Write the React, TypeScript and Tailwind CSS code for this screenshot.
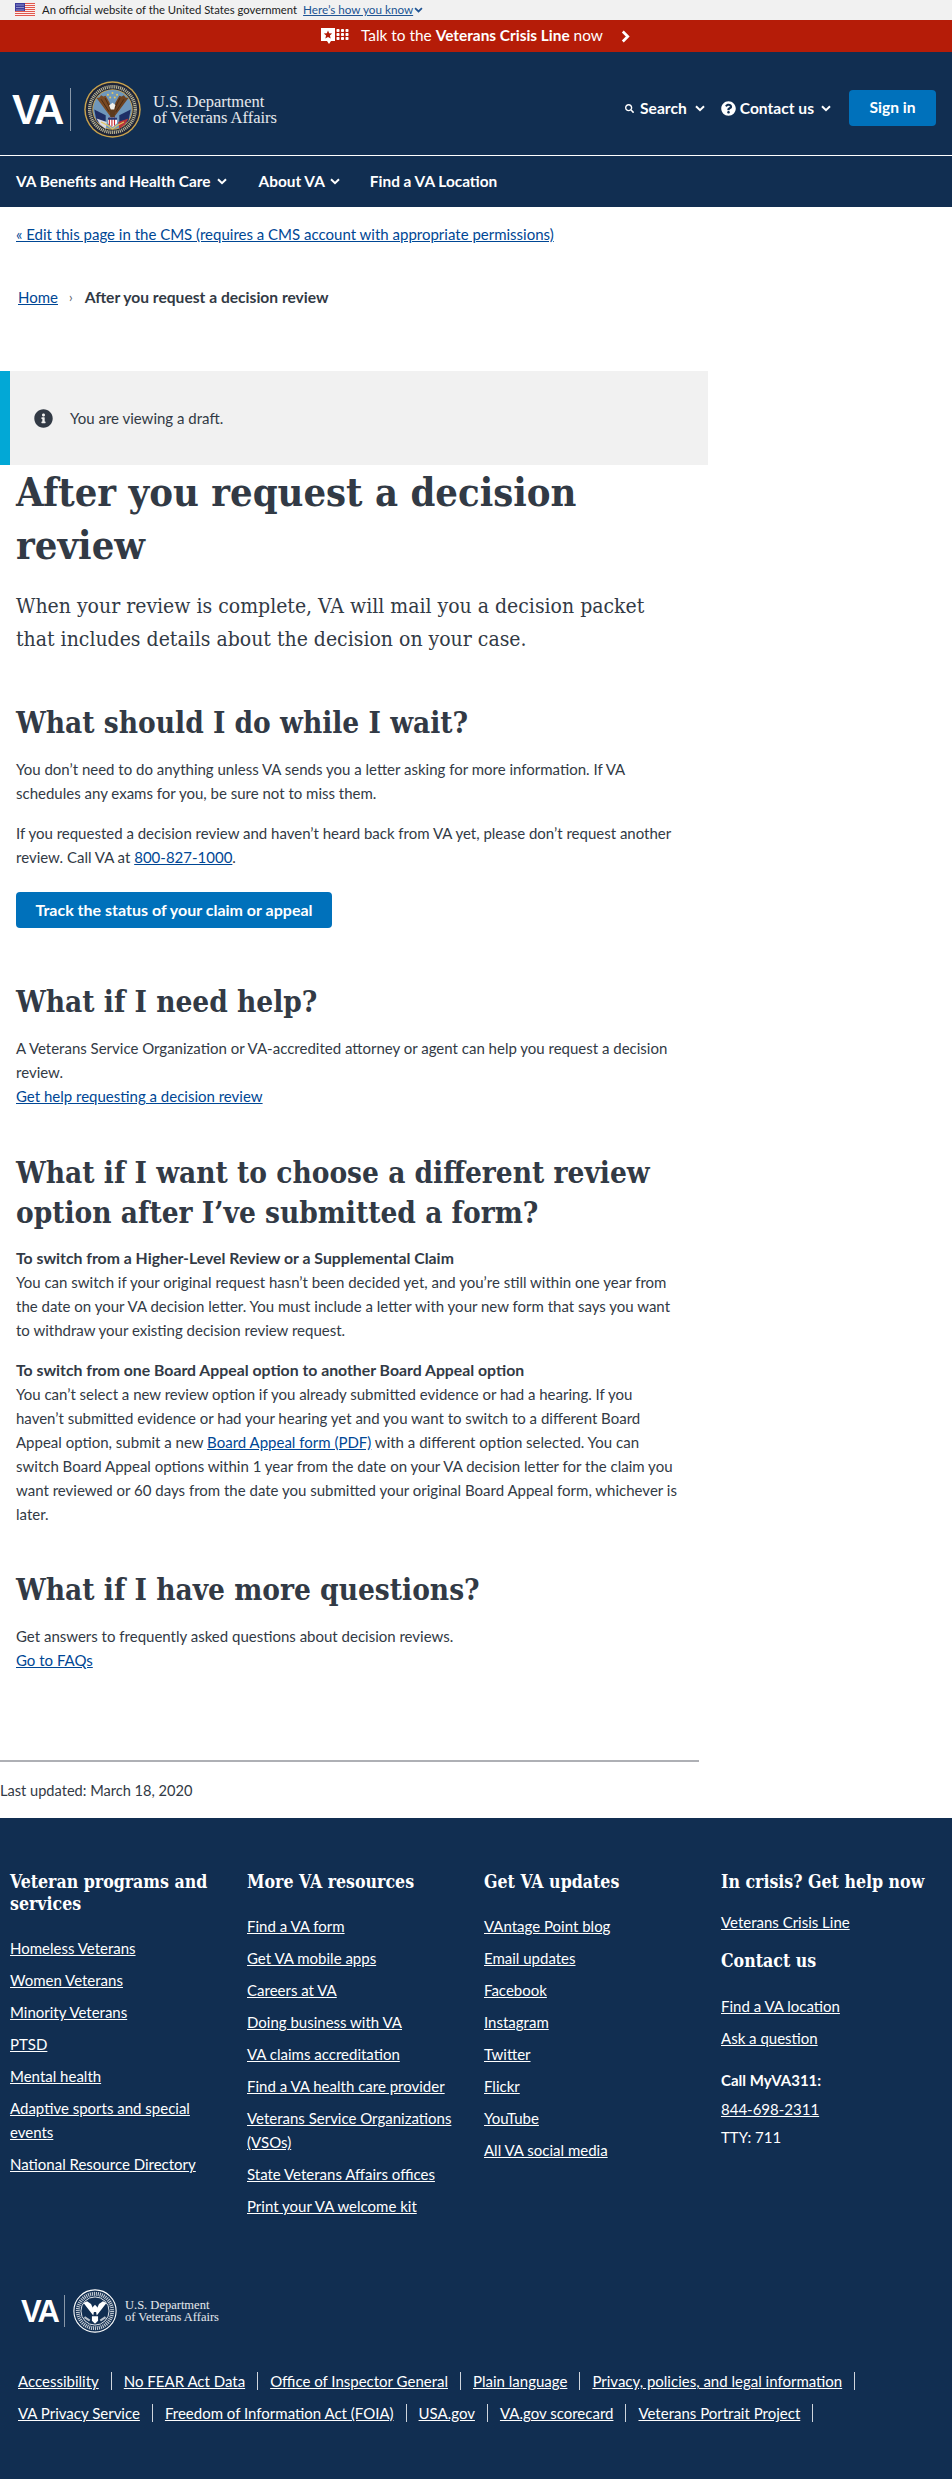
import { FaInfoCircle, FaQuestionCircle, FaSearch } from 'react-icons/fa';

const NAVY = 'bg-[#112e51]';

const Chevron = ({ className = 'w-[10px] h-[7px]' }: { className?: string }) => (
  <svg viewBox="0 0 10 7" className={className} fill="none" stroke="currentColor" strokeWidth="2">
    <path d="M1 1.2 5 5.2 9 1.2" />
  </svg>
);

const Flag = () => (
  <svg viewBox="0 0 20 14" className="w-[20px] h-[14px] shrink-0">
    <rect width="20" height="14" fill="#fff" />
    {[0, 2, 4, 6, 8, 10, 12].map((y) => (
      <rect key={y} y={y} width="20" height="1.1" fill="#e0584d" />
    ))}
    <rect width="10" height="8" fill="#3c3c9c" />
    {[1.5, 3.5, 5.5, 7.5].map((x) =>
      [1.5, 4, 6.5].map((y) => <rect key={`${x}${y}`} x={x} y={y} width="1" height="1" fill="#dfe3f5" />),
    )}
  </svg>
);

const CrisisIcon = () => (
  <svg viewBox="0 0 28 16" className="w-[28px] h-[16px] shrink-0">
    <path d="M0 0h14v13H10l-2 3-2-3H0z" fill="#fff" />
    <path d="M7 2.5l1.2 2.8 3 .2-2.3 2 .8 3L7 8.9 4.300 10.500l.8-3-2.300-2 3-.2z" fill="#b51c08" />
    {[15.5, 20, 24.5].map((x) =>
      [1, 5, 9].map((y) => <rect key={`${x}${y}`} x={x} y={y} width="3" height="3" rx="0.8" fill="#fff" />),
    )}
  </svg>
);

const Seal = () => (
  <svg viewBox="0 0 100 100" className="w-[57px] h-[57px] shrink-0">
    <circle cx="50" cy="50" r="49.500" fill="#c9a24d" />
    <circle cx="50" cy="50" r="47" fill="#1d2438" />
    <circle cx="50" cy="50" r="40" fill="none" stroke="#b9b394" strokeWidth="6" strokeDasharray="2 1.4" />
    <circle cx="50" cy="50" r="35.500" fill="#c9a24d" />
    <circle cx="50" cy="50" r="34" fill="#6f97bb" />
    {[[42, 24], [50, 21], [58, 24], [46, 29], [54, 29]].map(([x, y]) => (
      <circle key={`${x}${y}`} cx={x} cy={y} r="1.700" fill="#e8c95a" />
    ))}
    <path d="M18 50 38 60 38 82 22 70z" fill="#1f2f66" />
    <path d="M82 50 62 60 62 82 78 70z" fill="#1f2f66" />
    <path d="M22 66 40 72 38 84 28 76z" fill="#d9d9e2" />
    <path d="M78 66 60 72 62 84 72 76z" fill="#b8353a" />
    <path d="M46 62 22 30 27 29 30 25 34 27 38 26 41 31 45 38 48 52z" fill="#7a4a24" />
    <path d="M54 62 78 30 73 29 70 25 66 27 62 26 59 31 55 38 52 52z" fill="#6d4220" />
    <path d="M30 32 44 54M37 30 47 50M70 32 56 54M63 30 53 50" stroke="#3f2610" strokeWidth="1.500" />
    <path d="M45 50 50 42 55 48 54 64 46 64z" fill="#5c3a1c" />
    <path d="M44 43 50 38 55 42 53 50 47 50z" fill="#f3f1ea" />
    <path d="M42 64h16v10l-8 7-8-7z" fill="#fff" />
    <path d="M44.500 64v13M49 64v16M53.500 64v14" stroke="#c8282e" strokeWidth="2" />
    <path d="M42 64h16v4H42z" fill="#23356f" />
    <path d="M30 72 42 78 50 84 58 78 70 72" fill="none" stroke="#e4c65c" strokeWidth="2" />
  </svg>
);

const WhiteSeal = () => (
  <svg viewBox="0 0 100 100" className="w-[44px] h-[44px] shrink-0" fill="none" stroke="#fff">
    <circle cx="50" cy="50" r="48" strokeWidth="2.500" />
    <circle cx="50" cy="50" r="39" strokeWidth="9" strokeDasharray="2.500 2" strokeOpacity="0.75" />
    <circle cx="50" cy="50" r="32" strokeWidth="2" />
    <path d="M46 60 24 32 32 28 41 34 48 50zM54 60 76 32 68 28 59 34 52 50z" fill="#fff" stroke="none" />
    <path d="M44 42 50 36 56 42 54 52 46 52z" fill="#fff" stroke="none" />
    <path d="M43 62h14v10l-7 7-7-7z" fill="#fff" stroke="none" />
    <path d="M26 64 38 72M74 64 62 72" strokeWidth="5" strokeOpacity="0.7" />
  </svg>
);

const VaLogo = ({ small }: { small?: boolean }) =>
  small ? (
    <div className="flex items-center h-[44px] pl-[21px]">
      <span className="font-['Liberation_Sans',sans-serif] font-bold text-[31px] leading-none tracking-[-2px] text-white w-[43px]">VA</span>
      <span className="block w-px h-[32px] bg-white/50 mr-[8px]" />
      <WhiteSeal />
      <div className="ml-[8px] font-['Liberation_Serif',serif] text-[12.5px] leading-[12.5px] text-white/90">
        <div>U.S. Department</div>
        <div>of Veterans Affairs</div>
      </div>
    </div>
  ) : (
    <div className="flex items-center h-[57px]">
      <span className="font-['Liberation_Sans',sans-serif] font-bold text-[42px] leading-none tracking-[-3px] text-white w-[58px]">VA</span>
      <span className="block w-px h-[43px] bg-white/50 mr-[13px]" />
      <Seal />
      <div className="ml-[12px] font-['Liberation_Serif',serif] text-[16.5px] leading-[16px] text-white/90">
        <div>U.S. Department</div>
        <div>of Veterans Affairs</div>
      </div>
    </div>
  );

const A = ({ children }: { children: React.ReactNode }) => (
  <a href="#" className="text-[#004795] underline">
    {children}
  </a>
);

const H2 = ({ children, className = '' }: { children: React.ReactNode; className?: string }) => (
  <h2 className={`font-['DejaVu_Serif_Condensed','DejaVu_Serif',serif] font-bold text-[29.5px] leading-[40px] text-[#323a45] ${className}`}>
    {children}
  </h2>
);

const FootLink = ({ children }: { children: React.ReactNode }) => (
  <li className="max-w-[220px]">
    <a href="#" className="text-white underline">
      {children}
    </a>
  </li>
);

const FootHead = ({ children, className = '' }: { children: React.ReactNode; className?: string }) => (
  <h3 className={`font-['DejaVu_Serif_Condensed','DejaVu_Serif',serif] font-bold text-[17.6px] leading-[22px] text-white ${className}`}>
    {children}
  </h3>
);

const Links = ({ items }: { items: string[] }) => (
  <ul className="flex flex-col gap-[8px] leading-[24px]">
    {items.map((t) => (
      <FootLink key={t}>{t}</FootLink>
    ))}
  </ul>
);

const bottomLinks = [
  ['Accessibility', 'No FEAR Act Data', 'Office of Inspector General', 'Plain language', 'Privacy, policies, and legal information'],
  ['VA Privacy Service', 'Freedom of Information Act (FOIA)', 'USA.gov', 'VA.gov scorecard', 'Veterans Portrait Project'],
];

export default function App() {
  return (
    <div className="w-[952px] h-[2479px] overflow-hidden bg-white font-['Lato',sans-serif] text-[15px] text-[#323a45]">
      {/* gov banner */}
      <div className="h-[20px] bg-[#f1f1f1] flex items-center pl-[15px] text-[11.3px] text-[#212121]">
        <Flag />
        <span className="ml-[7px]">An official website of the United States government</span>
        <a href="#" className="ml-[6px] text-[11.7px] text-[#205493] underline">Here’s how you know</a>
        <Chevron className="w-[9px] h-[6px] ml-[1px] text-[#205493]" />
      </div>

      {/* crisis line */}
      <div className="h-[32px] bg-[#b51c08] flex items-center pl-[321px] text-white text-[15.4px]">
        <CrisisIcon />
        <span className="ml-[12px]">
          Talk to the <strong className="font-bold">Veterans Crisis Line</strong> now
        </span>
        <svg viewBox="0 0 10 14" className="w-[9px] h-[13px] ml-[18px]" fill="none" stroke="currentColor" strokeWidth="3">
          <path d="M2 1.500 7.500 7 2 12.500" />
        </svg>
      </div>

      {/* header */}
      <header className={`${NAVY} text-white`}>
        <div className="h-[103px] flex justify-between items-start pl-[12px] pr-[16px] pt-[29px]">
          <VaLogo />
          <div className="flex items-center mt-[9px] font-bold text-[15.6px]">
            <FaSearch className="w-[9px] h-[9px] mr-[6px]" />
            <span className="translate-y-px">Search</span>
            <Chevron className="w-[10px] h-[7px] ml-[8px] mr-[16px]" />
            <FaQuestionCircle className="w-[15px] h-[15px] mr-[4px]" />
            <span className="translate-y-px">Contact us</span>
            <Chevron className="w-[10px] h-[7px] ml-[7px] mr-[18px]" />
            <a href="#" className="w-[87px] h-[36px] rounded-[4px] bg-[#0071bb] flex items-center justify-center">Sign in</a>
          </div>
        </div>
        <div className="h-px bg-white" />
        <nav className="h-[51px] flex items-center pl-[16px] font-bold text-[15.4px]">
          <span>VA Benefits and Health Care</span>
          <Chevron className="w-[10px] h-[7px] ml-[6px] mr-[32px]" />
          <span>About VA</span>
          <Chevron className="w-[10px] h-[7px] ml-[5px] mr-[30px]" />
          <span>Find a VA Location</span>
        </nav>
      </header>

      {/* edit + breadcrumb */}
      <div className="pt-[15px] pl-[16px] leading-[24px]">
        <A>« Edit this page in the CMS (requires a CMS account with appropriate permissions)</A>
      </div>
      <div className="mt-[39px] pl-[18px] flex items-center leading-[24px]">
        <A>Home</A>
        <span className="ml-[11px] mr-[12px] text-[#5b616b] text-[13px]">›</span>
        <strong className="font-bold text-[15.6px]">After you request a decision review</strong>
      </div>

      {/* draft notice */}
      <div className="mt-[62px] w-[708px] h-[94px] bg-[#f1f1f1] border-l-[10px] border-[#02a8d6] flex items-center pl-[24px]">
        <FaInfoCircle className="w-[19px] h-[19px] text-[#323a45]" />
        <span className="ml-[17px]">You are viewing a draft.</span>
      </div>

      <main className="pl-[16px] w-[683px] leading-[24px]">
        <h1 className="font-['DejaVu_Serif_Condensed','DejaVu_Serif',serif] font-bold text-[39.6px] leading-[53px] text-[#323a45] mt-px">
          After you request a decision review
        </h1>
        <p className="font-['DejaVu_Serif_Condensed','DejaVu_Serif',serif] text-[21px] leading-[33px] mt-[18px] max-w-[640px]">
          When your review is complete, VA will mail you a decision packet that includes details about the decision on your case.
        </p>

        <H2 className="mt-[47px]">What should I do while I wait?</H2>
        <p className="mt-[14px]">
          You don’t need to do anything unless VA sends you a letter asking for more information. If VA schedules any exams for you, be sure not to miss them.
        </p>
        <p className="mt-[16px]">
          If you requested a decision review and haven’t heard back from VA yet, please don’t request another review. Call VA at <A>800-827-1000</A>.
        </p>
        <a href="#" className="mt-[23px] w-[316px] h-[36px] rounded-[4px] bg-[#0071bb] text-white font-bold text-[16px] flex items-center justify-center">
          Track the status of your claim or appeal
        </a>

        <H2 className="mt-[54px]">What if I need help?</H2>
        <p className="mt-[14px]">
          A Veterans Service Organization or VA-accredited attorney or agent can help you request a decision review.
          <br />
          <A>Get help requesting a decision review</A>
        </p>

        <H2 className="mt-[45px]">What if I want to choose a different review option after I’ve submitted a form?</H2>
        <p className="mt-[13px]">
          <strong className="font-bold text-[15.8px]">To switch from a Higher-Level Review or a Supplemental Claim</strong>
          <br />
          You can switch if your original request hasn’t been decided yet, and you’re still within one year from the date on your VA decision letter. You must include a letter with your new form that says you want to withdraw your existing decision review request.
        </p>
        <p className="mt-[16px]">
          <strong className="font-bold text-[15.8px]">To switch from one Board Appeal option to another Board Appeal option</strong>
          <br />
          You can’t select a new review option if you already submitted evidence or had a hearing. If you haven’t submitted evidence or had your hearing yet and you want to switch to a different Board Appeal option, submit a new <A>Board Appeal form (PDF)</A> with a different option selected. You can switch Board Appeal options within 1 year from the date on your VA decision letter for the claim you want reviewed or 60 days from the date you submitted your original Board Appeal form, whichever is later.
        </p>

        <H2 className="mt-[44px]">What if I have more questions?</H2>
        <p className="mt-[14px]">
          Get answers to frequently asked questions about decision reviews.
          <br />
          <A>Go to FAQs</A>
        </p>
      </main>

      {/* last updated */}
      <div className="mt-[88px] w-[699px] h-[2px] bg-[#aeb0b5]" />
      <div className="mt-[17px] leading-[24px] text-[14.6px] text-[#323a45]">Last updated: March 18, 2020</div>

      {/* footer */}
      <footer className={`${NAVY} mt-[15px] h-[661px] text-white`}>
        <div className="grid grid-cols-[237px_237px_237px_231px] pl-[10px] pt-[53px] h-[471px]">
          <div>
            <FootHead>Veteran programs and services</FootHead>
            <div className="mt-[21px]">
              <Links items={['Homeless Veterans', 'Women Veterans', 'Minority Veterans', 'PTSD', 'Mental health', 'Adaptive sports and special events', 'National Resource Directory']} />
            </div>
          </div>
          <div>
            <FootHead>More VA resources</FootHead>
            <div className="mt-[21px]">
              <Links items={['Find a VA form', 'Get VA mobile apps', 'Careers at VA', 'Doing business with VA', 'VA claims accreditation', 'Find a VA health care provider', 'Veterans Service Organizations (VSOs)', 'State Veterans Affairs offices', 'Print your VA welcome kit']} />
            </div>
          </div>
          <div>
            <FootHead>Get VA updates</FootHead>
            <div className="mt-[21px]">
              <Links items={['VAntage Point blog', 'Email updates', 'Facebook', 'Instagram', 'Twitter', 'Flickr', 'YouTube', 'All VA social media']} />
            </div>
          </div>
          <div>
            <FootHead>In crisis? Get help now</FootHead>
            <div className="mt-[17px] leading-[24px]">
              <a href="#" className="underline">Veterans Crisis Line</a>
            </div>
            <FootHead className="mt-[16px]">Contact us</FootHead>
            <div className="mt-[22px]">
              <Links items={['Find a VA location', 'Ask a question']} />
            </div>
            <div className="mt-[18px] font-bold leading-[24px]">Call MyVA311:</div>
            <div className="mt-[5px] leading-[24px]">
              <a href="#" className="underline">844-698-2311</a>
            </div>
            <div className="mt-[4px] leading-[24px]">TTY: 711</div>
          </div>
        </div>
        <VaLogo small />
        <div className="mt-[36px] pl-[18px] flex flex-col gap-[8px] leading-[24px]">
          {bottomLinks.map((row) => (
            <div key={row[0]} className="flex items-center">
              {row.map((t) => (
                <span key={t} className="flex items-center">
                  <a href="#" className="underline">{t}</a>
                  <span className="block w-px h-[18px] bg-white/80 mx-[12px]" />
                </span>
              ))}
            </div>
          ))}
        </div>
      </footer>
    </div>
  );
}
